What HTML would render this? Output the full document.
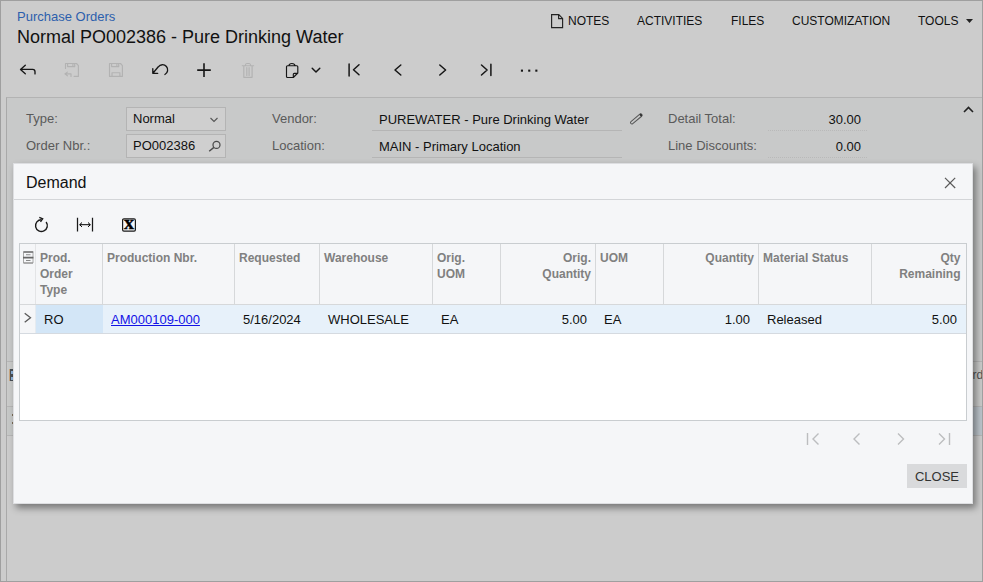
<!DOCTYPE html>
<html><head><meta charset="utf-8"><title>Purchase Orders</title>
<style>
*{box-sizing:border-box;margin:0;padding:0}
html,body{width:983px;height:582px;overflow:hidden;background:#cccccc;font-family:"Liberation Sans",Arial,sans-serif;font-size:13px;color:#000}
.abs{position:absolute}
#frame{position:absolute;left:0;top:0;width:983px;height:582px;border:1px solid #9f9f9f;pointer-events:none;z-index:50}
#crumb{left:17px;top:9px;font-size:13px;color:#2c5fad;line-height:16px}
#title{left:17px;top:25px;font-size:18px;color:#111;line-height:24px;white-space:nowrap}
.topm{top:14px;font-size:12px;color:#111;line-height:14px;white-space:nowrap}
.lbl{font-size:13px;color:#5a5a5a;line-height:16px;white-space:nowrap}
.val{font-size:13px;color:#111;line-height:16px;white-space:nowrap}
#panel{left:6px;top:97px;width:977px;height:485px;border-left:1px solid #a9a9a9;border-top:1px solid #b3b3b3;background:#cccccc}
.inp{border:1px solid #b4b4b4;background:#cfcfcf;height:24px}
#dlg{left:13px;top:163px;width:960px;height:341px;background:#f5f6f8;border:1px solid #dddee1;box-shadow:3px 4px 7px rgba(0,0,0,.42)}
#dlgtitle{left:12px;top:9px;font-size:16px;color:#111;line-height:20px}
#dlghr{left:0;top:35px;width:958px;height:1px;background:#d3d5d8}
#grid{left:5px;top:79px;width:948px;height:178px;border:1px solid #c9cdd0;background:#fff}
#ghead{left:0;top:0;width:946px;height:61px;background:#f5f6f8;border-bottom:1px solid #d6d8da}
.th{position:absolute;top:0;height:60px;border-left:1px solid #d6d8da;font-size:12px;font-weight:bold;color:#808080;line-height:16px;padding:6px 4px 0 4px;white-space:nowrap}
.th.r{text-align:right}
#grow{left:0;top:61px;width:946px;height:29px;background:#e7f1fa;border-bottom:1px solid #d5dae0}
.td{position:absolute;top:0;height:28px;font-size:13px;line-height:30px;color:#111;padding:0 8px;white-space:nowrap;border-left:1px solid transparent}
.td.r{text-align:right}
#closebtn{left:893px;top:300px;width:60px;height:24px;background:#d9dadc;font-size:13px;line-height:25px;text-align:center;color:#333}
svg{position:absolute;overflow:visible}
</style></head><body>
<div id="frame"></div>

<div class="abs" id="crumb">Purchase Orders</div>
<div class="abs" id="title">Normal PO002386 - Pure Drinking Water</div>

<div class="abs topm" style="left:568px">NOTES</div>
<div class="abs topm" style="left:637px">ACTIVITIES</div>
<div class="abs topm" style="left:731px">FILES</div>
<div class="abs topm" style="left:792px">CUSTOMIZATION</div>
<div class="abs topm" style="left:918px">TOOLS</div>
<svg style="left:551px;top:14px" width="13" height="15" viewBox="0 0 13 15"><path d="M0.6 0.6h7.2l3.800 3.800v9.200H0.600z M7.600 0.800v3.800h3.800" fill="none" stroke="#222" stroke-width="1.150"/></svg>
<svg style="left:966px;top:19px" width="8" height="5" viewBox="0 0 8 5"><path d="M0 0h7L3.5 4z" fill="#222"/></svg>

<!-- toolbar -->
<svg id="tb" style="left:0;top:55px" width="560" height="30" viewBox="0 0 560 30" fill="none" stroke="#161616" stroke-width="1.35" stroke-linecap="round" stroke-linejoin="round">
 <!-- back arrow -->
 <path d="M25.300 10.200l-4.800 4.200 4.800 4.300M20.700 14.400h12q2.300 0 2.300 2.300v2.200"/>
 <!-- save-close disabled -->
 <g stroke="#b2b2b2" stroke-width="1.150"><path d="M65.500 13.500v-5h11l1.900 2.200v10.700h-4.300M67.600 8.500v3.100h7.100v-3.100M72.900 9.300v1.400M67.400 17.100l-2.500 1.800 2.500 1.900M65.200 18.900h5.800v2.500"/></g>
 <!-- save disabled -->
 <g stroke="#b2b2b2" stroke-width="1.150"><path d="M109.500 8.500h11l1.900 2.200v10.700h-12.900zM111.600 8.500v3.100h7.100v-3.100M116.900 9.300v1.400M112 21.400v-3.700h7.900v3.700"/></g>
 <!-- undo -->
 <path d="M152.800 13.700v4.600h4.900M152.900 18.200l5.400-6.400A5.200 5.200 0 1 1 164.900 19.500"/>
 <!-- plus -->
 <path d="M204 8.300v13.700M197.200 15.150h13.600" stroke-width="1.600" stroke-linecap="butt"/>
 <!-- trash disabled -->
 <g stroke="#b2b2b2" stroke-width="1.150"><path d="M242.300 10.700h11.300M243.800 10.900v11.400h8.300v-11.400M245.300 10.500q.200-2 1.500-2h2.400q1.300 0 1.500 2M246.800 12.500v8M249.100 12.500v8"/></g>
 <!-- clipboard -->
 <path d="M288.800 10.700h-1.300q-1 0-1 1v9.800q0 1 1 1h5.800l4.500-4.500v-6.300q0-1-1-1h-1.300M288.900 10.700q.200-2.200 3-2.200t3.100 2.200zM297.600 18.300h-3.300q-1 0-1 1v3" stroke-width="1.150"/>
 <path d="M312.200 13.200l3.800 3.900 3.800-3.900" stroke-width="1.450"/>
 <!-- first -->
 <path d="M349.100 8.900v12M359 9.800l-5.500 5 5.500 5" stroke-width="1.500"/>
 <!-- prev -->
 <path d="M400.800 10l-5.800 5 5.800 5" stroke-width="1.500"/>
 <!-- next -->
 <path d="M439.800 10l5.800 5-5.800 5" stroke-width="1.500"/>
 <!-- last -->
 <path d="M481.500 10l5.600 5-5.600 5M490.900 9.200v11.400" stroke-width="1.500"/>
 <!-- dots -->
 <g fill="#161616" stroke="none"><rect x="520.900" y="14.600" width="2.100" height="2.100"/><rect x="528.200" y="14.600" width="2.100" height="2.100"/><rect x="535.300" y="14.600" width="2.100" height="2.100"/></g>
</svg>

<div class="abs" id="panel"></div>
<div class="abs" style="left:7px;top:98px;width:975px;height:263px;background:#c8c9c9"></div>
<div class="abs lbl" style="left:26px;top:111px">Type:</div>
<div class="abs lbl" style="left:26px;top:138px">Order Nbr.:</div>
<div class="abs inp" style="left:126px;top:107px;width:100px"></div>
<div class="abs inp" style="left:126px;top:134px;width:100px"></div>
<div class="abs val" style="left:133px;top:111px">Normal</div>
<div class="abs val" style="left:133px;top:138px">PO002386</div>
<svg style="left:208.500px;top:116.500px" width="10" height="6" viewBox="0 0 10 6"><path d="M1.500 1l3.500 3.500 3.500-3.500" fill="none" stroke="#555" stroke-width="1.100"/></svg>
<svg style="left:207px;top:139px" width="14" height="14" viewBox="0 0 14 14"><circle cx="9.500" cy="5.900" r="3.500" fill="none" stroke="#4a4a4a" stroke-width="1.250"/><path d="M6.900 8.400l-4.700 3.900" stroke="#4a4a4a" stroke-width="1.400"/></svg>

<div class="abs lbl" style="left:272px;top:111px">Vendor:</div>
<div class="abs lbl" style="left:272px;top:138px">Location:</div>
<div class="abs val" style="left:379px;top:112px">PUREWATER - Pure Drinking Water</div>
<div class="abs val" style="left:379px;top:139px">MAIN - Primary Location</div>
<div class="abs" style="left:372px;top:130px;width:250px;height:1px;background:#b5b5b5"></div>
<div class="abs" style="left:372px;top:157px;width:250px;height:1px;background:#b5b5b5"></div>
<svg style="left:629px;top:111px" width="16" height="16" viewBox="0 0 16 16"><g transform="rotate(-40 7.300 7.900)"><rect x="0.200" y="6.500" width="14.200" height="2.800" rx="1.300" fill="none" stroke="#555" stroke-width="1"/><rect x="12.300" y="6.500" width="2.100" height="2.800" rx="1" fill="#333"/></g></svg>

<div class="abs lbl" style="left:668px;top:111px">Detail Total:</div>
<div class="abs lbl" style="left:668px;top:138px">Line Discounts:</div>
<div class="abs val" style="left:761px;top:112px;width:100px;text-align:right">30.00</div>
<div class="abs val" style="left:761px;top:139px;width:100px;text-align:right">0.00</div>
<div class="abs" style="left:768px;top:130px;width:99px;height:0;border-top:1px dotted #b9b9b9"></div>
<div class="abs" style="left:768px;top:157px;width:99px;height:0;border-top:1px dotted #b9b9b9"></div>
<svg style="left:963px;top:105.500px" width="11" height="7" viewBox="0 0 11 7"><path d="M1 6l4.500-4.500 4.500 4.500" fill="none" stroke="#222" stroke-width="1.600"/></svg>

<!-- background bits peeking out -->
<div class="abs" style="left:7px;top:361px;width:8px;height:46px;background:#cacbca;border-top:1px solid #b6b6b6;border-bottom:1px solid #b6b6b6"></div>
<div class="abs" style="left:7px;top:407px;width:8px;height:29px;background:#c6c8c7;border-bottom:1px solid #b6b6b6"></div>
<div class="abs" style="left:9px;top:369px;width:5px;height:12px;background:#4a4f55;border-left:1px solid #c9a680"></div><div class="abs" style="left:11px;top:371px;width:3px;height:3px;background:#8fb4dc"></div><div class="abs" style="left:11px;top:377px;width:3px;height:3px;background:#8fb4dc"></div>
<div class="abs" style="left:12px;top:414px;width:2px;height:2px;background:#7a6a55"></div>
<div class="abs" style="left:12px;top:422px;width:2px;height:2px;background:#7a6a55"></div>
<div class="abs" style="left:970px;top:361px;width:12px;height:46px;background:#cacbca;border-top:1px solid #b6b6b6;border-bottom:1px solid #b6b6b6"></div>
<div class="abs" style="left:970px;top:407px;width:12px;height:29px;background:#bcc4cb;border-bottom:1px solid #b6b6b6"></div>
<div class="abs" style="left:972.500px;top:367px;font-size:12px;color:#555;line-height:16px">rd</div>

<!-- dialog -->
<div class="abs" id="dlg">
 <div class="abs" id="dlgtitle">Demand</div>
 <svg style="left:930px;top:13px" width="12" height="12" viewBox="0 0 12 12"><path d="M1 0.800l10.200 10.200M11.200 0.800l-10.200 10.200" fill="none" stroke="#5a5a5a" stroke-width="1.200"/></svg>
 <div class="abs" id="dlghr"></div>
 <!-- grid toolbar -->
 <svg style="left:18px;top:51px" width="110" height="20" viewBox="0 0 110 20" fill="none" stroke="#1a1a1a" stroke-width="1.400">
  <path d="M9.500 4.700a5.900 5.900 0 1 0 4.600 2.300"/><path d="M7.300 2.300l3.400 1.500-2.200 3" stroke-width="1.300"/>
  <path d="M45.500 2.800v13.800M60.500 2.800v13.800" stroke-width="1.250"/><path d="M47.700 9.700h10.600M50 7.500l-2.300 2.200 2.300 2.200M56 7.500l2.300 2.200-2.300 2.200" stroke="#000" stroke-width="1"/>
  <rect x="90.600" y="3.900" width="12.800" height="12.200" rx="1.300" stroke-width="1.200"/>
 </svg>
 <div class="abs" style="left:108px;top:50px;width:14px;height:18px;font-family:'Liberation Serif',serif;font-weight:bold;font-size:18px;line-height:18px;text-align:center;color:#000;-webkit-text-stroke:0.3px #000;transform:scaleX(1.120)">x</div>

 <div class="abs" id="grid">
  <div class="abs" id="ghead">
   <svg style="left:3px;top:7px" width="11" height="13" viewBox="0 0 11 13" fill="none" stroke="#808080" stroke-width="1"><path d="M0.500 1.500v10.500h9.500v-10.500" stroke="#a8a8a8"/><path d="M0.300 1h10M0 6.700h10.400" stroke="#666" stroke-width="1.700"/><path d="M0.500 12h9.500" stroke="#8a8a8a"/><path d="M3 3.800h4.500M3 9.500h4.500" stroke="#8a8a8a" stroke-width="1.100"/></svg>
   <div class="th" style="left:15px;width:67px;border-left:1px solid #e3e4e6">Prod.<br>Order<br>Type</div>
   <div class="th" style="left:82px;width:132px">Production Nbr.</div>
   <div class="th" style="left:214px;width:85px">Requested</div>
   <div class="th" style="left:299px;width:113px">Warehouse</div>
   <div class="th" style="left:412px;width:68px">Orig.<br>UOM</div>
   <div class="th r" style="left:480px;width:95px">Orig.<br>Quantity</div>
   <div class="th" style="left:575px;width:68px">UOM</div>
   <div class="th r" style="left:643px;width:95px">Quantity</div>
   <div class="th" style="left:738px;width:113px">Material Status</div>
   <div class="th r" style="left:851px;width:93.500px">Qty<br>Remaining</div>
  </div>
  <div class="abs" id="grow">
   <div class="abs" style="left:0;top:0;width:15px;height:28px;background:#f5f6f8"></div>
   <svg style="left:4px;top:8px" width="7" height="11" viewBox="0 0 7 11"><path d="M0.700 0.300l5.800 4.500-5.800 4.500" fill="none" stroke="#5a5a5a" stroke-width="1.300"/></svg>
   <div class="td" style="left:15px;width:68px;background:#d3e6f7;border-left:1px solid #e6ebf0;padding-left:8px">RO</div>
   <div class="td" style="left:82px;width:132px;color:#1212e6;text-decoration:underline">AM000109-000</div>
   <div class="td" style="left:214px;width:85px">5/16/2024</div>
   <div class="td" style="left:299px;width:113px">WHOLESALE</div>
   <div class="td" style="left:412px;width:68px">EA</div>
   <div class="td r" style="left:480px;width:95px">5.00</div>
   <div class="td" style="left:575px;width:68px">EA</div>
   <div class="td r" style="left:643px;width:95px">1.00</div>
   <div class="td" style="left:738px;width:113px">Released</div>
   <div class="td r" style="left:851px;width:94px">5.00</div>
  </div>
 </div>

 <!-- pager -->
 <svg style="left:790px;top:266px" width="150" height="18" viewBox="0 0 150 18" fill="none" stroke="#bcbdbf" stroke-width="1.400">
  <path d="M3.500 3v12M14.500 3.500l-5.500 5.500 5.500 5.500"/>
  <path d="M55.500 3.500l-5.500 5.500 5.500 5.500"/>
  <path d="M94 3.500l5.500 5.500-5.500 5.500"/>
  <path d="M135 3.500l5.500 5.500-5.500 5.500M145.500 3v12"/>
 </svg>
 <div class="abs" id="closebtn">CLOSE</div>
</div>
</body></html>
